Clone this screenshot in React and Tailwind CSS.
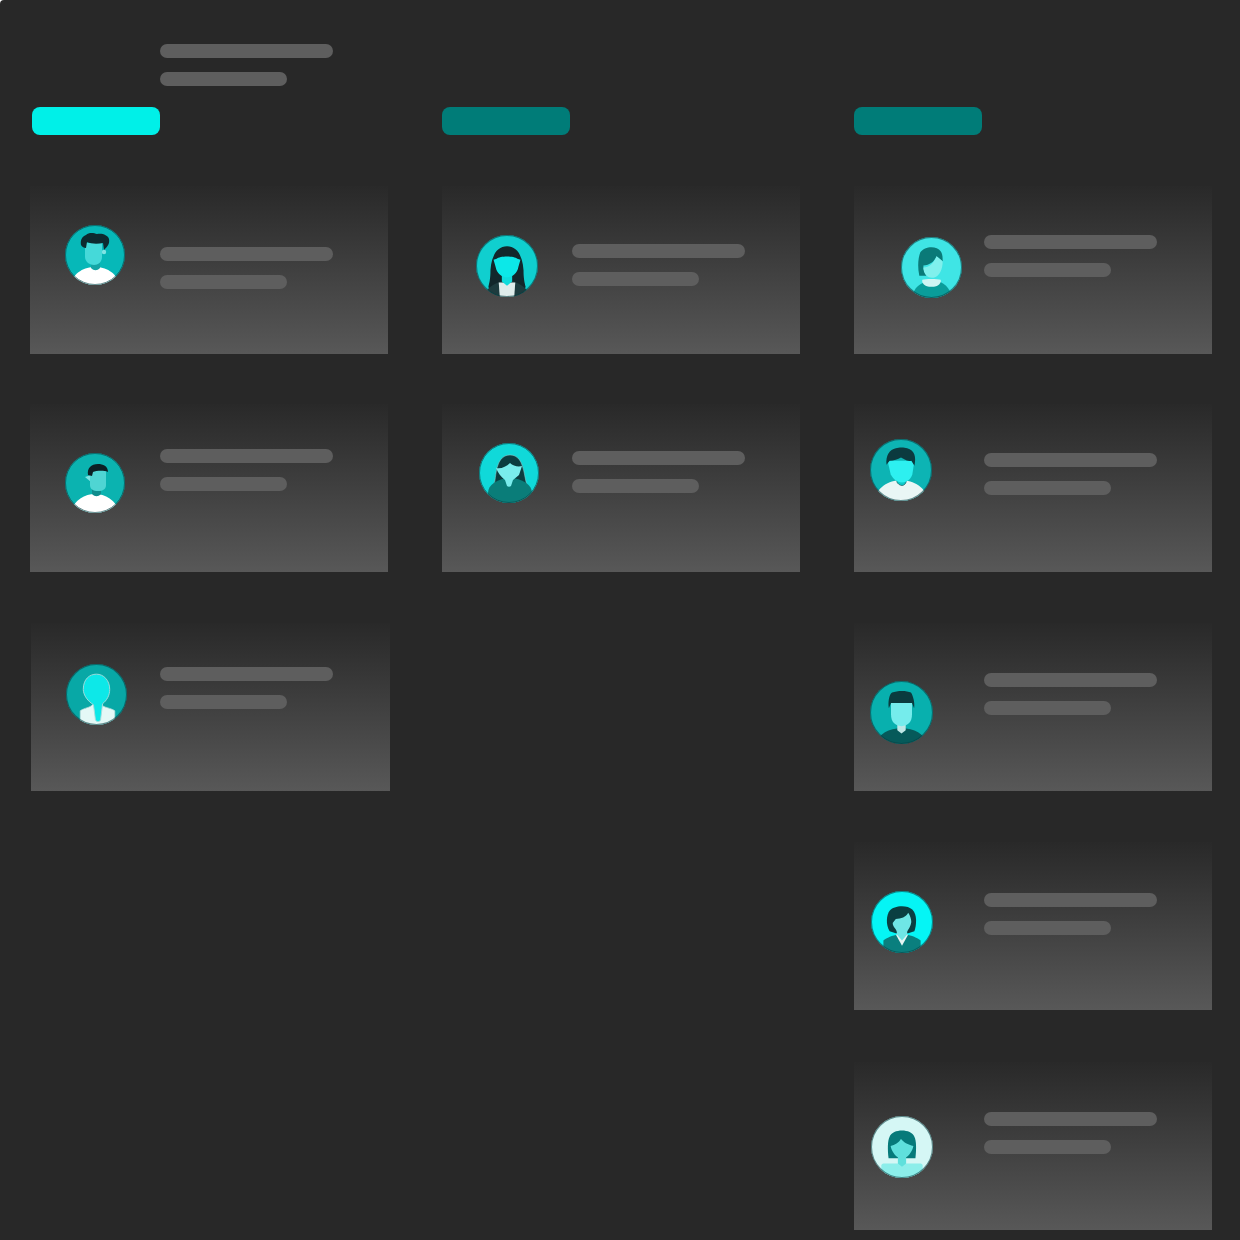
import { useId } from 'react';

function Avatar({ bg, className, children }) {
  const clipId = useId();
  return (
    <svg viewBox="0 0 60 60" className={`block shrink-0 blur-[0.5px] ${className}`}>
      <defs>
        <clipPath id={clipId}>
          <circle cx="30" cy="30" r="30" />
        </clipPath>
      </defs>
      <g clipPath={`url(#${clipId})`}>
        <rect width="60" height="60" fill={bg} />
        {children}
      </g>
      <circle cx="30" cy="30" r="29.5" fill="none" stroke="#0a3f42" strokeOpacity="0.6" strokeWidth="1" />
    </svg>
  );
}

const avatarArt = {
  manWhiteTee: (
    <>
      <path d="M6 60C8 47 20 42 30 42s22 5 24 18z" fill="#fff" />
      <path d="M26 34h9v9c-3 3-6 3-9 0z" fill="#15a5a5" />
      <circle cx="39" cy="27" r="2.2" fill="#7fe3e3" />
      <path d="M20 18h17v14c0 5-4 8-8 8s-9-3-9-8z" fill="#45d9d9" />
      <path d="M16 20c-1-6 2-9 5-10 3-3 8-2 11-1 5-1 11 1 12 5 1 5-2 8-5 11l-1-7c-5 1-12 1-16-1l-1 6c-2 0-4-1-5-3z" fill="#0d2a2f" />
    </>
  ),
  manSideTee: (
    <>
      <path d="M6 60C8 47 20 41 30 41s22 6 24 19z" fill="#fff" />
      <path d="M27 33h9v8c-3 3-6 3-9 0z" fill="#0f8d8d" />
      <path d="M20 24l6-2v7z" fill="#7fe3e3" />
      <path d="M25 17h16v15c0 4-3 6-8 6s-8-2-8-6z" fill="#4fd5d3" />
      <path d="M23 22c-1-7 3-11 10-11 5 0 10 2 10 8-5-2-12-1-15 0l-1 4z" fill="#0c2024" />
    </>
  ),
  bust: (
    <>
      <path d="M14 60V46c4-3 10-3 12-6h9c2 3 9 3 13 6v14z" fill="#e4f8f6" stroke="#b8dcda" strokeWidth="0.7" />
      <path d="M17 25c0-10 6-15 13-15s13 6 13 15c0 6-3 11-7 14l-2 16c-1 2-4 2-5 0l-2-15c-5-3-10-9-10-15z" fill="#0de8e8" stroke="#a9dcdc" strokeWidth="0.9" />
    </>
  ),
  longHair: (
    <>
      <path d="M12 50c1-4 2-8 2-16 1-15 7-23 16-23s15 8 16 23c0 8 1 12 2 16l-3 10H15z" fill="#12272b" />
      <path d="M8 60c1-8 9-13 16-15h12c7 2 15 7 16 15z" fill="#1d3b3e" />
      <path d="M22 46h16l-1 14H23z" fill="#dfeceb" />
      <path d="M25 38h10v7l-5 4-5-4z" fill="#0fdcdc" />
      <path d="M17 24l3-1c3-3 17-3 20 0l3 1-2 7c-1 6-6 10-11 10s-10-4-11-10z" fill="#0ce8e8" />
    </>
  ),
  tealTop: (
    <>
      <path d="M13 48c4-8 3-19 6-26 2-6 6-10 12-10s10 4 12 10c3 7 3 18 7 26z" fill="#0b3d40" stroke="#a0c8c8" strokeWidth="0.5" />
      <ellipse cx="31" cy="50" rx="22" ry="15" fill="#0a7d79" />
      <path d="M17 25c5 1 10-1 14-5 3 3 8 4 12 3l-3 9-6 5-2 6c-1 1-3 1-4 0l-2-6c-4-3-7-7-9-12z" fill="#79ecec" />
    </>
  ),
  glasses: (
    <>
      <path d="M11 60c1-10 8-16 19-17s19 7 20 17z" fill="#0a9d9a" />
      <path d="M21 42c3-1 15-1 18 0 1 3-2 7-9 7s-10-4-9-7z" fill="#cff5f3" />
      <path d="M18 38c-2-9-1-18 1-23 4-6 16-7 20-1 2 3 2 6 2 10-2-2-4-3-6-5-2 5-7 9-13 9 0 4 1 7 3 10z" fill="#0a7a78" />
      <path d="M22 30c6 0 10-4 13-11 2 2 4 3 6 5 0 7-3 15-9 16-6 1-10-4-10-10z" fill="#80f0ec" />
    </>
  ),
  manLightTee: (
    <>
      <path d="M4 60C6 47 18 40 30 40s25 7 26 20z" fill="#e9f6f5" />
      <path d="M26 35h9v6c0 2-2 4-4 4s-5-2-5-4z" fill="#0dcaca" stroke="#0a5d60" strokeWidth="0.7" />
      <path d="M17 21h26l-2 13c-1 4-5 8-10 8s-9-4-11-8z" fill="#2df0f0" />
      <path d="M16 25c-1-9 3-15 9-16 3-1 8-1 11 0 7 2 9 8 7 17l-3-5c-5 1-7-2-10-3-3 2-7 3-11 3z" fill="#0b3a3f" />
    </>
  ),
  manDarkTop: (
    <>
      <path d="M6 60c2-10 12-15 24-15s22 5 24 15z" fill="#065a5a" />
      <path d="M26 40h8v7l-4 3-4-3z" fill="#bfe7e6" />
      <path d="M20 20h20v12c0 7-4 11-10 11s-10-4-10-11z" fill="#75ecec" />
      <path d="M18 26c-1-5 0-13 3-15 5-2 14-2 18 0 2 3 4 10 3 15l-2-5H20z" fill="#0a3b3e" />
    </>
  ),
  womanJacket: (
    <>
      <path d="M12 60V48c3-3 9-5 14-6h8c5 1 11 3 14 6v12z" fill="#0a7f7e" />
      <path d="M24 42l6 11 6-11z" fill="#e6f5f4" />
      <path d="M18 39c-4-7-3-16 0-20 4-5 17-6 22-1 5 5 4 15 2 21l-6 2H24z" fill="#0a3f42" />
      <path d="M24 27c5 0 10-2 12-6 2 3 3 6 3 9-1 6-4 8-4 10v2l-5 6-5-6v-2c0-3-4-5-4-9z" fill="#6fe6e6" />
    </>
  ),
  womanPale: (
    <>
      <path d="M10 60V48c0-1 1-2 2-2h36c1 0 2 1 2 2v12z" fill="#8ceeea" />
      <path d="M17 41c-1-9-1-17 1-21 3-8 21-8 24 0 2 4 2 12 1 21z" fill="#067a7a" />
      <path d="M19 29c4-1 8-3 10-7 2 3 7 6 12 7-1 5-4 9-7 11v6l-4 3-4-3v-6c-3-2-6-6-7-11z" fill="#5fe0dc" />
    </>
  ),
};

const columns = [
  {
    pill: 'ml-[2px] bg-[#00f0e8]',
    cards: [
      { art: 'manWhiteTee', bg: '#06b8b8', gap: 'mt-[51px]', avatar: 'ml-[35px] mt-[39px] w-[60px] h-[60px]', bars: 'mt-[61px]' },
      { art: 'manSideTee', bg: '#0bb3b0', gap: 'mt-[50px]', avatar: 'ml-[35px] mt-[49px] w-[60px] h-[60px]', bars: 'mt-[45px]' },
      { art: 'bust', bg: '#08a8a6', gap: 'mt-[51px] ml-px w-[359px]', rail: 'w-[129px]', avatar: 'ml-[35px] mt-[41px] w-[61px] h-[61px]', bars: 'mt-[44px]' },
    ],
  },
  {
    pill: 'bg-[#007c78]',
    cards: [
      { art: 'longHair', bg: '#10cfcf', gap: 'mt-[51px]', avatar: 'ml-[34px] mt-[49px] w-[62px] h-[62px]', bars: 'mt-[58px]' },
      { art: 'tealTop', bg: '#10d9d9', gap: 'mt-[50px]', avatar: 'ml-[37px] mt-[39px] w-[60px] h-[60px]', bars: 'mt-[47px]' },
    ],
  },
  {
    pill: 'bg-[#007c78]',
    cards: [
      { art: 'glasses', bg: '#3fe5e5', gap: 'mt-[51px]', avatar: 'ml-[47px] mt-[51px] w-[61px] h-[61px]', bars: 'mt-[49px]' },
      { art: 'manLightTee', bg: '#0db4b4', gap: 'mt-[50px]', avatar: 'ml-[16px] mt-[35px] w-[62px] h-[62px]', bars: 'mt-[49px]' },
      { art: 'manDarkTop', bg: '#08b0ae', gap: 'mt-[51px]', avatar: 'ml-[16px] mt-[58px] w-[63px] h-[63px]', bars: 'mt-[50px]' },
      { art: 'womanJacket', bg: '#05f5f5', gap: 'mt-[51px]', avatar: 'ml-[17px] mt-[49px] w-[62px] h-[62px]', bars: 'mt-[51px]' },
      { art: 'womanPale', bg: '#d5f7f5', gap: 'mt-[52px]', avatar: 'ml-[17px] mt-[54px] w-[62px] h-[62px]', bars: 'mt-[50px]' },
    ],
  },
];

function Bars({ className = '' }) {
  return (
    <div className={`flex flex-col gap-[14px] ${className}`}>
      <div className="h-[14px] w-[173px] rounded-full bg-[#5e5e5e]" />
      <div className="h-[14px] w-[127px] rounded-full bg-[#5e5e5e]" />
    </div>
  );
}

function PersonCard({ card }) {
  return (
    <div className={`flex h-[168px] bg-gradient-to-b from-[#292929] to-[#585858] ${card.gap}`}>
      <div className={`shrink-0 ${card.rail || 'w-[130px]'}`}>
        <Avatar bg={card.bg} className={card.avatar}>
          {avatarArt[card.art]}
        </Avatar>
      </div>
      <Bars className={card.bars} />
    </div>
  );
}

export default function App() {
  return (
    <div className="h-[1240px] w-[1240px] overflow-hidden rounded-tl-[4px] bg-[#282828] pt-[44px]">
      {/* Header */}
      <Bars className="ml-[160px]" />

      {/* Board */}
      <div className="mt-[21px] grid grid-cols-[358px_358px_358px] gap-x-[54px] pl-[30px]">
        {columns.map((column, i) => (
          <div key={i} className="flex flex-col">
            <div className={`h-[28px] w-[128px] rounded-lg ${column.pill}`} />
            {column.cards.map((card) => (
              <PersonCard key={card.art} card={card} />
            ))}
          </div>
        ))}
      </div>
    </div>
  );
}
